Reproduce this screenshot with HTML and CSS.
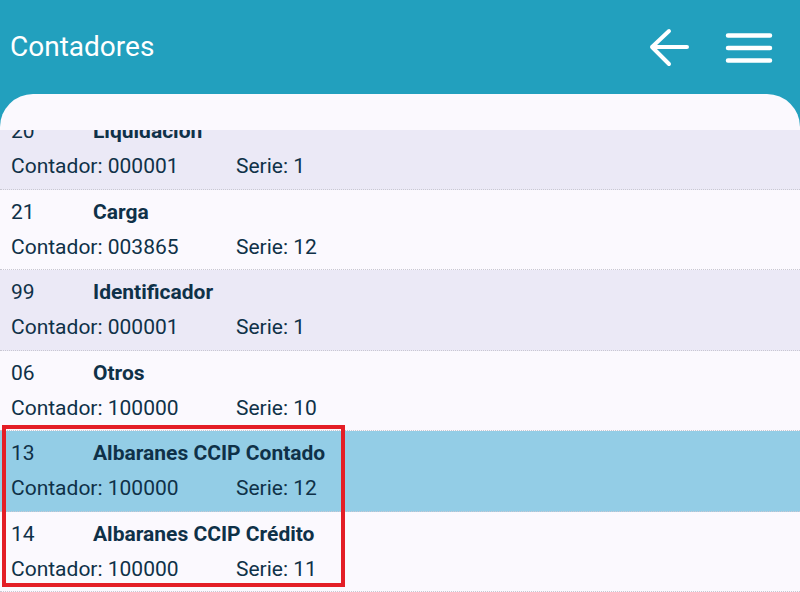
FILE: index.html
```html
<!DOCTYPE html>
<html lang="es">
<head>
<meta charset="utf-8">
<title>Contadores</title>
<link rel="stylesheet" href="styles.css">
</head>
<body>
<div class="app">
  <header class="topbar">
    <h1 class="title">Contadores</h1>
    <div class="actions">
      <svg class="icon-back" width="44" height="40" viewBox="0 0 44 40" aria-hidden="true">
        <path d="M4 20 H39 M21 4 L4 20 L21 37" fill="none" stroke="#fff" stroke-width="4" stroke-linecap="round" stroke-linejoin="round"/>
      </svg>
      <svg class="icon-menu" width="48" height="40" viewBox="0 0 48 40" aria-hidden="true">
        <path d="M3 8.5 H45 M3 21 H45 M3 33.5 H45" fill="none" stroke="#fff" stroke-width="4.5" stroke-linecap="round"/>
      </svg>
    </div>
  </header>
  <main class="card">
    <div class="viewport">
      <ul class="list">
        <li class="row alt">
          <div class="line"><span class="code">20</span><span class="name">Liquidación</span></div>
          <div class="line"><span class="counter">Contador: 000001</span><span class="serie">Serie: 1</span></div>
        </li>
        <li class="row">
          <div class="line"><span class="code">21</span><span class="name">Carga</span></div>
          <div class="line"><span class="counter">Contador: 003865</span><span class="serie">Serie: 12</span></div>
        </li>
        <li class="row alt">
          <div class="line"><span class="code">99</span><span class="name">Identificador</span></div>
          <div class="line"><span class="counter">Contador: 000001</span><span class="serie">Serie: 1</span></div>
        </li>
        <li class="row">
          <div class="line"><span class="code">06</span><span class="name">Otros</span></div>
          <div class="line"><span class="counter">Contador: 100000</span><span class="serie">Serie: 10</span></div>
        </li>
        <li class="row selected">
          <div class="line"><span class="code">13</span><span class="name">Albaranes CCIP Contado</span></div>
          <div class="line"><span class="counter">Contador: 100000</span><span class="serie">Serie: 12</span></div>
        </li>
        <li class="row">
          <div class="line"><span class="code">14</span><span class="name">Albaranes CCIP Crédito</span></div>
          <div class="line"><span class="counter">Contador: 100000</span><span class="serie">Serie: 11</span></div>
        </li>
      </ul>
    </div>
    <div class="highlight-box"></div>
  </main>
</div>
</body>
</html>
```

FILE: styles.css
```css
* { box-sizing: border-box; }
html, body { margin: 0; padding: 0; }
body {
  width: 800px;
  height: 592px;
  overflow: hidden;
  font-family: Roboto, "Noto Sans", sans-serif;
  background: #22a0be;
}
.app {
  width: 800px;
  height: 592px;
  display: flex;
  flex-direction: column;
  background: #22a0be;
  position: relative;
}
.topbar {
  height: 94px;
  flex: 0 0 94px;
  display: flex;
  align-items: flex-start;
  padding: 27px 27px 0 10px;
}
.title {
  margin: 4px 0 0 0;
  font-size: 28px;
  line-height: 32px;
  font-weight: 400;
  color: #fff;
}
.actions {
  margin-left: auto;
  display: flex;
  gap: 33px;
}
.actions svg { display: block; }
.card {
  flex: 1 1 auto;
  background: #fbf9fe;
  border-radius: 33px 33px 0 0;
  padding-top: 36px;
  display: flex;
  flex-direction: column;
  min-height: 0;
}
.viewport {
  flex: 1 1 auto;
  overflow: hidden;
  min-height: 0;
}
.list {
  list-style: none;
  margin: -21px 0 0 0;
  padding: 0;
}
.row {
  height: 80.5px;
  padding: 8px 0 0 11px;
  display: flex;
  flex-direction: column;
  gap: 7px;
  border-bottom: 1px dotted #c9c8d2;
  background: #fbf9fe;
  color: #0f3148;
  font-size: 21px;
}
.row.alt { background: #ebe9f6; }
.row.selected { background: #93cde6; }
.line {
  display: flex;
  line-height: 28px;
  white-space: nowrap;
}
.code { width: 82px; }
.name { font-weight: 700; }
.counter { width: 225px; }
.highlight-box {
  position: absolute;
  left: 2px;
  top: 425px;
  width: 343px;
  height: 162px;
  border: 4px solid #e41e26;
  pointer-events: none;
}
```
